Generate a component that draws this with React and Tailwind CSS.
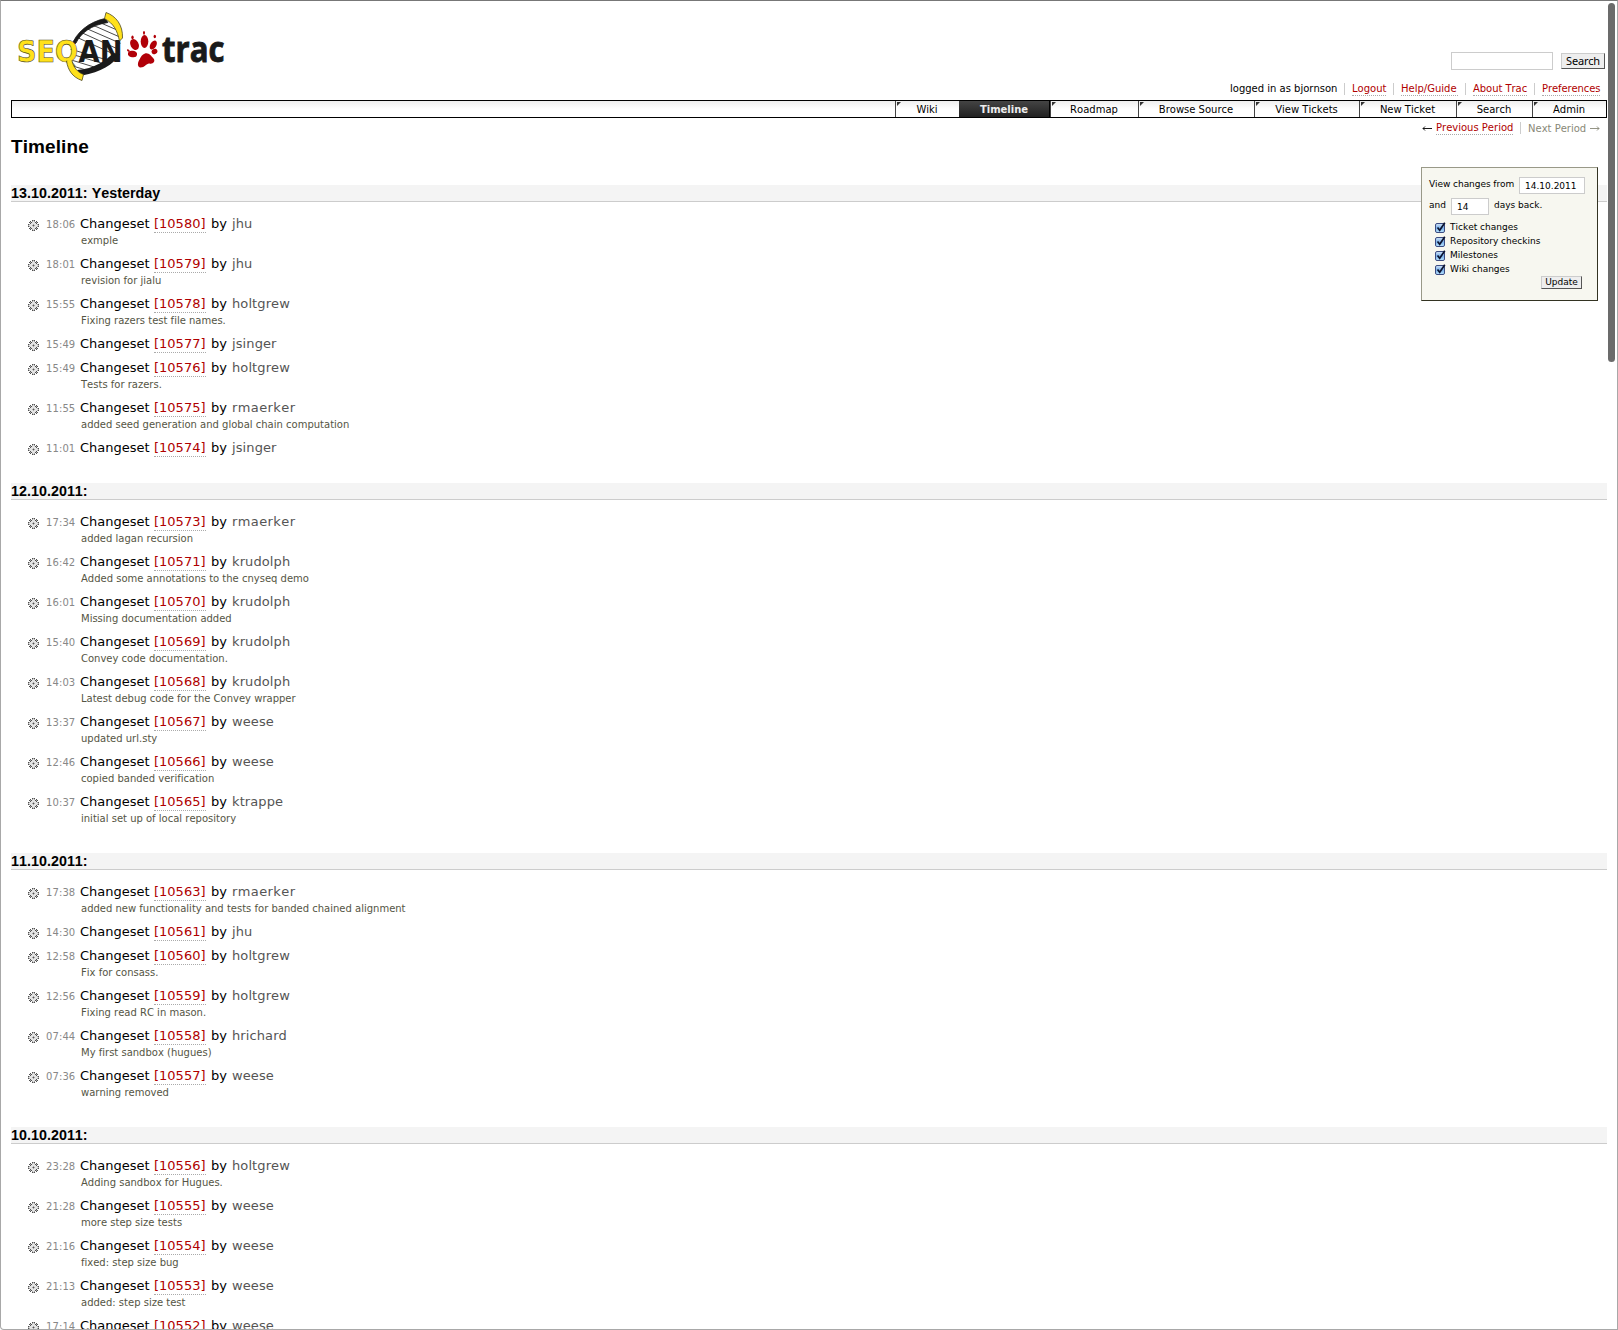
const days = [
  { title: '13.10.2011: Yesterday', items: [
    ['18:06', '10580', 'jhu', 'exmple'],
    ['18:01', '10579', 'jhu', 'revision for jialu'],
    ['15:55', '10578', 'holtgrew', 'Fixing razers test file names.'],
    ['15:49', '10577', 'jsinger', ''],
    ['15:49', '10576', 'holtgrew', 'Tests for razers.'],
    ['11:55', '10575', 'rmaerker', 'added seed generation and global chain computation'],
    ['11:01', '10574', 'jsinger', ''],
  ] },
  { title: '12.10.2011:', items: [
    ['17:34', '10573', 'rmaerker', 'added lagan recursion'],
    ['16:42', '10571', 'krudolph', 'Added some annotations to the cnyseq demo'],
    ['16:01', '10570', 'krudolph', 'Missing documentation added'],
    ['15:40', '10569', 'krudolph', 'Convey code documentation.'],
    ['14:03', '10568', 'krudolph', 'Latest debug code for the Convey wrapper'],
    ['13:37', '10567', 'weese', 'updated url.sty'],
    ['12:46', '10566', 'weese', 'copied banded verification'],
    ['10:37', '10565', 'ktrappe', 'initial set up of local repository'],
  ] },
  { title: '11.10.2011:', items: [
    ['17:38', '10563', 'rmaerker', 'added new functionality and tests for banded chained alignment'],
    ['14:30', '10561', 'jhu', ''],
    ['12:58', '10560', 'holtgrew', 'Fix for consass.'],
    ['12:56', '10559', 'holtgrew', 'Fixing read RC in mason.'],
    ['07:44', '10558', 'hrichard', 'My first sandbox (hugues)'],
    ['07:36', '10557', 'weese', 'warning removed'],
  ] },
  { title: '10.10.2011:', items: [
    ['23:28', '10556', 'holtgrew', 'Adding sandbox for Hugues.'],
    ['21:28', '10555', 'weese', 'more step size tests'],
    ['21:16', '10554', 'weese', 'fixed: step size bug'],
    ['21:13', '10553', 'weese', 'added: step size test'],
    ['17:14', '10552', 'weese', ''],
  ] },
];

const tabs = [
  ['Wiki', 'w-[64px]'],
  ['Timeline', 'w-[91px]'],
  ['Roadmap', 'w-[88px]'],
  ['Browse Source', 'w-[116px]'],
  ['View Tickets', 'w-[105px]'],
  ['New Ticket', 'w-[97px]'],
  ['Search', 'w-[76px]'],
  ['Admin', 'w-[74px]'],
];

function Logo() {
  return (
    <svg className="block h-[90px] w-[240px]" viewBox="0 0 240 90">
      <defs>
        <clipPath id="helix"><path d="M106 19C88 22 75 34 71 48C67 58 70 68 82 76C99 71 113 60 120 46C123 34 117 24 106 19Z" /></clipPath>
      </defs>
      <g clipPath="url(#helix)" stroke="#1a1a1a" strokeWidth="0.8">
        <path d="M94 20l30 13M88 23l34 15M83 27l39 17M78 31l42 19M74 36l44 20M71 54l40 12M68 59l36 11M66 64l30 9M70 49l44 13" />
      </g>
      <path d="M105 18.500C89 22 76 32 71 47L76 43C81 33 91 25 108 22.500Z" fill="#1a1a1a" stroke="#1a1a1a" strokeWidth="0.800" />
      <path d="M120 54C113 65 101 72 82 75.500L77 70C94 69 107 60 113 53Z" fill="#1a1a1a" />
      <text x="17" y="61.500" textLength="61" lengthAdjust="spacingAndGlyphs" fontFamily="DejaVu Sans, sans-serif" fontSize="30" fontWeight="700" fill="#ffe11b" stroke="#4d4820" strokeWidth="0.6">SEQ</text>
      <text x="78.500" y="61.500" textLength="44" lengthAdjust="spacingAndGlyphs" fontFamily="DejaVu Sans, sans-serif" fontSize="30" fontWeight="700" fill="#1a1a1a">AN</text>
      <path d="M106 12.500C116 16 123 25 122.500 38L119.500 41C117 30 114 24 104.500 18.500Z" fill="#ffe11b" stroke="#4d4820" strokeWidth="0.8" />
      <path d="M66.500 61C68 70 72 77 82 80.500L83.500 74.500C77 72 73.500 67 72 61Z" fill="#ffe11b" stroke="#4d4820" strokeWidth="0.8" />
      <path d="M67.300 60h4.300v2h-4.300z" fill="#ffe11b" />
      <g fill="#b10008">
        <ellipse cx="134.500" cy="44.500" rx="4" ry="5.700" transform="rotate(-28 134.500 44.500)" />
        <ellipse cx="144.500" cy="41.500" rx="3.800" ry="6.400" />
        <ellipse cx="153.300" cy="45" rx="3" ry="5" transform="rotate(30 153.300 45)" />
        <ellipse cx="132.500" cy="54" rx="4.600" ry="3.200" transform="rotate(10 132.500 54)" />
        <ellipse cx="154.500" cy="51.500" rx="3" ry="2.500" transform="rotate(-30 154.500 51.500)" />
        <path d="M145 53.500C149 52.500 151 56 153.500 58.500C156 61.500 152.500 64.500 149.500 63.500C146.500 63 145 67.500 140.500 67.500C137 67 137.500 62.500 139.500 59.500C141 57 142 54.200 145 53.500Z" />
        <ellipse cx="132.500" cy="37.300" rx="1.200" ry="1.900" />
        <ellipse cx="144" cy="32.800" rx="1" ry="1.900" />
        <ellipse cx="154.800" cy="36.500" rx="1.200" ry="1.800" />
        <ellipse cx="128.300" cy="50.500" rx="1.600" ry="1" transform="rotate(40 128.300 50.500)" />
      </g>
      <text x="162" y="61.500" textLength="62.500" lengthAdjust="spacingAndGlyphs" fontFamily="Open Sans, sans-serif" fontSize="35" fontWeight="700" fill="#1a1a1a" stroke="#1a1a1a" strokeWidth="0.9">trac</text>
    </svg>
  );
}

const gearRows = [
  '....#o#....',
  '..#.o-o.#..',
  '.#o#---#o#.',
  '..#-----#..',
  '#o---o---o#',
  'o---o#o---o',
  '#o---o---o#',
  '..#-----#..',
  '.#o#---#o#.',
  '..#.o-o.#..',
  '....#o#....',
];
const gearInk = { '#': '#505050', o: '#a8a8a8', '-': '#e4e4e4' };

function Gear() {
  return (
    <svg className="mt-[4px] block h-[11px] w-[11px] shrink-0" viewBox="0 0 11 11" shapeRendering="crispEdges">
      {gearRows.flatMap((row, y) => [...row].map((c, x) => c === '.' ? null : (
        <rect key={`${x}-${y}`} x={x} y={y} width="1" height="1" fill={gearInk[c]} />
      )))}
    </svg>
  );
}

const Link = ({ className, children }) => (
  <a className={`whitespace-nowrap border-b border-dotted border-[#aaa] text-[#b00000] ${className || ''}`}>{children}</a>
);

const Sep = () => <span className="mx-[7px] h-[12px] w-px bg-[#ccc]" />;

function Arrow({ flip }) {
  return (
    <svg className={`block h-[7px] w-[10px] ${flip ? 'rotate-180' : ''}`} viewBox="0 0 10 7">
      <path d="M1 3.500h9M3 1.500L1 3.500L3 5.500" fill="none" stroke="currentColor" strokeWidth="0.900" />
    </svg>
  );
}

function Check({ children }) {
  return (
    <label className="flex h-[14px] items-center">
      <svg className="mt-px block h-[11px] w-[11px]" viewBox="0 0 11 11">
        <defs>
          <linearGradient id="aqua" x1="0" y1="0" x2="0" y2="1"><stop offset="0" stopColor="#d5e5f7" /><stop offset="0.500" stopColor="#79b0ea" /><stop offset="1" stopColor="#b9e4ff" /></linearGradient>
        </defs>
        <rect x="0.500" y="1.500" width="9" height="9" rx="1.500" fill="url(#aqua)" stroke="#3c4c82" />
        <path d="M2.500 5.500L4.700 8.300L9.800 0.700" fill="none" stroke="#0c1430" strokeWidth="1.700" />
      </svg>
      <span className="ml-[4px] mt-[2px]">{children}</span>
    </label>
  );
}

export default function App() {
  return (
    <div className="relative h-[1330px] w-[1618px] overflow-hidden rounded-bl border border-[#a8a8a8] border-t-[#777] bg-white pl-[10px] pr-[10px] text-[10px] text-black [font-family:'DejaVu_Sans',Verdana,sans-serif] [font-kerning:none] [font-variant-ligatures:none]">
      <header className="flex h-[99px] items-start justify-between">
        <div className="-ml-[11px] -mt-px"><Logo /></div>
        <div className="flex flex-col items-end">
          <div className="mr-[2px] mt-[51px] flex items-center gap-[8px]">
            <div className="h-[18px] w-[102px] border border-[#ccc] bg-white" />
            <button className="flex h-[16px] w-[44px] items-center justify-center border border-[#ccc] border-b-[#555] border-r-[#555] bg-[#eee] text-[11px] tracking-[-0.2px] [font-family:'Noto_Sans',sans-serif]">Search</button>
          </div>
          <nav className="mr-[7px] mt-[11px] flex h-[15px] items-center leading-[13px]">
            <span className="w-[107px] whitespace-nowrap">logged in as bjornson</span>
            <Sep /><Link className="w-[34px]">Logout</Link>
            <Sep /><Link className="w-[57px]">Help/Guide</Link>
            <Sep /><Link className="w-[54px] tracking-[-0.05px]">About Trac</Link>
            <Sep /><Link className="w-[58px] tracking-[-0.1px]">Preferences</Link>
          </nav>
        </div>
      </header>
      <nav className="flex h-[18px] justify-end border border-black bg-linear-to-b from-[#eee] via-white to-white">
        {tabs.map(([name, w]) => name === 'Timeline' ? (
          <div key={name} className={`${w} flex items-center justify-center border-r border-black bg-linear-to-b from-[#444] to-[#222] font-bold text-[#eee]`}>{name}</div>
        ) : (
          <div key={name} className={`${w} relative flex items-center justify-center border-l border-[#444] pr-px`}>
            <svg className="absolute left-[1px] top-[1px] h-[4px] w-[4px]" viewBox="0 0 4 4"><path d="M0 0h4L0 4z" fill="#333" /></svg>
            {name}
          </div>
        ))}
      </nav>
      <div className="mr-[7px] flex h-[19px] items-center justify-end pt-px leading-[13px]">
        <span className="w-[14px]"><Arrow /></span><Link className="w-[77px]">Previous Period</Link>
        <Sep />
        <span className="w-[62px] whitespace-nowrap text-[#887]">Next Period</span><span className="w-[10px] text-[#887]"><Arrow flip /></span>
      </div>
      <h1 className="-mt-px h-[49px] text-[19px] font-bold leading-[22px] tracking-[0.1px] [font-family:'Liberation_Sans',Arial,sans-serif]">Timeline</h1>
      <main>
        {days.map((d) => (
          <section key={d.title} className="pb-[23px]">
            <h2 className="mb-[10px] h-[17px] border-b border-[#ccc] bg-[#f4f4f4] text-[14.300px] font-bold leading-[16px] tracking-[0.030px] [font-family:'Liberation_Sans',Arial,sans-serif]">{d.title}</h2>
            {d.items.map(([time, rev, who, msg]) => (
              <div key={rev} className="py-[4px] pl-[17px]">
                <div className="flex h-[16px] whitespace-nowrap text-[13px] leading-[16px]">
                  <Gear />
                  <span className="ml-[7px] w-[34px] text-[10px] leading-[17px] tracking-[0.1px] text-[#888]">{time}</span>
                  <span className="w-[74px]">Changeset</span>
                  <Link className="h-[17px] w-[52px]">[{rev}]</Link>
                  <span className="ml-[5px] w-[21px]">by</span>
                  <span className={who === 'rmaerker' ? 'tracking-[0.4px] text-[#555]' : 'tracking-[0.1px] text-[#555]'}>{who}</span>
                </div>
                {msg && <p className="h-[16px] whitespace-nowrap pl-[53px] text-[10px] leading-[18px] text-[#554]">{msg}</p>}
              </div>
            ))}
          </section>
        ))}
      </main>
      <aside className="absolute left-[1420px] top-[166px] h-[134px] w-[177px] border border-b-[#332] border-l-[#998] border-r-[#332] border-t-[#998] bg-[#f7f7f0] px-[7px] pt-[9px] text-[9px]">
        <div className="flex h-[18px] items-start justify-between pr-[5px]">
          <span className="w-[85px] whitespace-nowrap leading-[14px] tracking-[-0.06px]">View changes from</span>
          <span className="h-[17px] w-[66px] shrink-0 border border-[#ccc] bg-white pl-[5px] text-[9px] leading-[16px]">14.10.2011</span>
        </div>
        <div className="mt-[3px] flex h-[18px] items-start">
          <span className="w-[22px] leading-[14px]">and</span>
          <span className="h-[17px] w-[38px] border border-[#ccc] bg-white pl-[5px] leading-[16px]">14</span>
          <span className="ml-[5px] whitespace-nowrap leading-[14px]">days back.</span>
        </div>
        <div className="ml-[6px] mt-[4px]">
          <Check>Ticket changes</Check>
          <Check>Repository checkins</Check>
          <Check>Milestones</Check>
          <Check>Wiki changes</Check>
        </div>
        <button className="ml-[112px] flex h-[13px] w-[41px] items-center justify-center border border-[#ccc] border-b-[#555] border-r-[#555] bg-[#eee]">Update</button>
      </aside>
      <div className="absolute left-[1607px] top-[2px] h-[359px] w-[7px] rounded-full bg-[#6b6b6b]" />
    </div>
  );
}
